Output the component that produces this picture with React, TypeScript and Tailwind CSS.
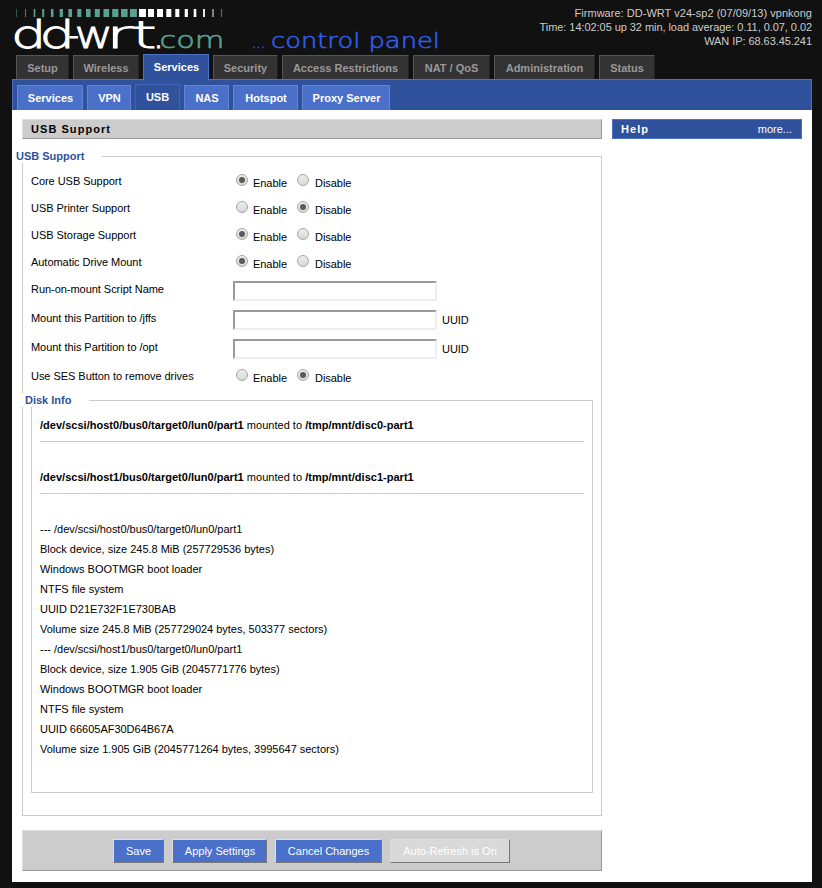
import type { ReactNode } from 'react';

const BARS: [number, number, string][] = [
  [16.5, 0.8, '#3d6b60'], [25.5, 1, '#4d8677'], [34.5, 1.6, '#5aa08f'], [43.2, 2, '#5aa08f'],
  [52.2, 2.6, '#5aa08f'], [61.3, 3.3, '#5aa08f'], [70.2, 3.6, '#5aa08f'], [79.3, 4, '#5aa08f'],
  [88.3, 4.6, '#5aa08f'], [97.3, 5, '#5aa08f'], [106.3, 5.6, '#5aa08f'], [115.3, 6.2, '#5aa08f'],
  [124.3, 6.6, '#5aa08f'], [133.4, 7, '#5aa08f'], [142.5, 7, '#fff'], [151, 6, '#fff'],
  [160, 6, '#fff'], [168.8, 5, '#fff'], [177.3, 4, '#fff'], [186.3, 3.2, '#fff'],
  [195, 2.6, '#fff'], [204, 1.8, '#fff'], [213, 1.2, '#ccc'], [221.5, 1.2, '#666'],
];

// Each wordmark letter is stretched on its own: [letter, x, advance width]
const WORDMARK: [string, number, number][] = [
  ['d', 11, 35.4], ['d', 39.4, 35.4], ['-', 68.4, 10.4], ['w', 74.5, 38.5], ['r', 106, 28], ['t', 132.5, 24], ['.', 152.5, 12],
];

function Logo() {
  return (
    <svg width="450" height="54" viewBox="0 0 450 54" className="block shrink-0 overflow-visible">
      {BARS.map(([cx, w, fill]) => (
        <rect key={cx} x={cx - w / 2} y="9" width={w} height="8" fill={fill} />
      ))}
      <g fontFamily="'DejaVu Sans Light', 'DejaVu Sans', sans-serif" fontWeight="200">
        {WORDMARK.map(([letter, x, width]) => (
          <text key={x} x={x} y="48" fontSize="36.5" fill="#fff" stroke="#fff" strokeWidth="0.9" textLength={width} lengthAdjust="spacingAndGlyphs">{letter}</text>
        ))}
        <text x="159.5" y="48" fontSize="23" fill="#5aa08f" stroke="#5aa08f" strokeWidth="0.6" textLength="65" lengthAdjust="spacingAndGlyphs">com</text>
        <text x="252" y="47.5" fontSize="21" fill="#2f60f0" stroke="#2f60f0" strokeWidth="0.5" textLength="13" lengthAdjust="spacingAndGlyphs">...</text>
        <text x="271" y="47.5" fontSize="21" fill="#2f60f0" stroke="#2f60f0" strokeWidth="0.5" textLength="169" lengthAdjust="spacingAndGlyphs">control panel</text>
      </g>
    </svg>
  );
}

const TABS: [string, string][] = [
  ['Setup', 'w-[53px]'], ['Wireless', 'w-[66px]'], ['Services', 'w-[66px]'], ['Security', 'w-[65px]'],
  ['Access Restrictions', 'w-[127px]'], ['NAT / QoS', 'w-[77px]'], ['Administration', 'w-[101px]'], ['Status', 'w-[56px]'],
];

const SUBTABS: [string, string][] = [
  ['Services', 'w-[66px]'], ['VPN', 'w-[44px]'], ['USB', 'w-[45px]'], ['NAS', 'w-[45px]'],
  ['Hotspot', 'w-[65px]'], ['Proxy Server', 'w-[88px]'],
];

function Radio({ on }: { on: boolean }) {
  return (
    <span className="mt-px flex size-3 items-center justify-center rounded-full border border-[#a6a6a6] bg-linear-to-b from-[#eee] to-[#d8d8d8]">
      {on && <span className="size-1.5 rounded-full bg-[#5a5a5a]" />}
    </span>
  );
}

function RadioRow({ label, enabled }: { label: string; enabled: boolean }) {
  return (
    <div className="flex h-[27px] items-start tracking-[-0.04px]">
      <span className="w-[205px] pt-0.5">{label}</span>
      <Radio on={enabled} />
      <span className="ml-[5px] w-11 pt-1">Enable</span>
      <Radio on={!enabled} />
      <span className="ml-1.5 pt-1">Disable</span>
    </div>
  );
}

function InputRow({ label, suffix }: { label: string; suffix?: string }) {
  return (
    <div className="flex h-[29px] items-start tracking-[-0.04px]">
      <span className="w-[202px] pt-0.5">{label}</span>
      <input className="h-5 w-[204px] border-2 border-t-[#999] border-r-[#eee] border-b-[#eee] border-l-[#999] bg-white outline-none" />
      {suffix && <span className="ml-[5px] pt-1">{suffix}</span>}
    </div>
  );
}

function Button({ children, className }: { children: ReactNode; className: string }) {
  return (
    <button className={`h-6 border border-t-[#ddd] border-r-[#777] border-b-[#777] border-l-[#ddd] pt-px text-white ${className}`}>
      {children}
    </button>
  );
}

const DISK_LINES = [
  '--- /dev/scsi/host0/bus0/target0/lun0/part1',
  'Block device, size 245.8 MiB (257729536 bytes)',
  'Windows BOOTMGR boot loader',
  'NTFS file system',
  'UUID D21E732F1E730BAB',
  'Volume size 245.8 MiB (257729024 bytes, 503377 sectors)',
  '--- /dev/scsi/host1/bus0/target0/lun0/part1',
  'Block device, size 1.905 GiB (2045771776 bytes)',
  'Windows BOOTMGR boot loader',
  'NTFS file system',
  'UUID 66605AF30D64B67A',
  'Volume size 1.905 GiB (2045771264 bytes, 3995647 sectors)',
];

function Mount({ device, target }: { device: string; target: string }) {
  return (
    <div className="h-[52px]">
      <p className="h-[27px] border-b border-[#ccc] leading-5 tracking-[0.02px]">
        <b>{device}</b> mounted to <b>{target}</b>
      </p>
    </div>
  );
}

export default function App() {
  return (
    <div className="h-[888px] w-[822px] overflow-hidden bg-[#111] font-['Liberation_Sans',Arial,sans-serif] text-[11px] leading-[13px] text-black">
      <header className="flex h-[54px] justify-between pr-[10px]">
        <Logo />
        <div className="pt-1.5 text-right leading-[14px] tracking-[-0.06px] text-[#ccc]">
          <p className="tracking-[0.03px]">Firmware: DD-WRT v24-sp2 (07/09/13) vpnkong</p>
          <p>Time: 14:02:05 up 32 min, load average: 0.11, 0.07, 0.02</p>
          <p>WAN IP: 68.63.45.241</p>
        </div>
      </header>

      <nav className="flex h-[25px] items-end gap-1 pl-4 font-bold">
        {TABS.map(([name, width]) =>
          name === 'Services' ? (
            <div key={name} className={`relative z-10 -mb-0.5 h-[27px] border border-b-0 border-[#4a70c9] bg-[#30519c] pt-1.5 pl-px text-center text-white ${width}`}>{name}</div>
          ) : (
            <div key={name} className={`h-6 border border-b-0 border-t-[#555] border-r-[#222] border-l-[#555] bg-[#333] pt-1.5 text-center text-[#999] ${width}`}>{name}</div>
          ),
        )}
      </nav>

      <nav className="mr-[10px] ml-3 flex h-[31px] items-end gap-1 border border-b-0 border-[#4a70c9] bg-[#30519c] pl-1 font-bold text-white">
        {SUBTABS.map(([name, width]) =>
          name === 'USB' ? (
            <div key={name} className={`h-[26px] border border-b-0 border-[#4063b5] bg-[#30519c] pt-1.5 text-center ${width}`}>{name}</div>
          ) : (
            <div key={name} className={`h-[25px] border border-b-0 border-[#6485d6] bg-[#4a70c9] pt-1.5 pl-px text-center ${width}`}>{name}</div>
          ),
        )}
      </nav>

      <main className="mr-[10px] ml-3 flex h-[772px] gap-[10px] bg-white px-[10px] pt-[9px]">
        <div className="w-[580px]">
          <h2 className="h-5 border border-t-[#ddd] border-r-[#999] border-b-[#999] border-l-[#ddd] bg-[#ccc] pt-[3px] pl-2 font-bold tracking-[1.05px]">USB Support</h2>

          <fieldset className="mt-[10px] h-[667px] border border-[#ccc] px-2">
            <legend className="-ml-[18px] h-[14px] bg-white pt-px pr-[18px] pl-[3px] font-bold text-[#30519c]">USB Support</legend>
            <div className="pt-[10px]">
              <RadioRow label="Core USB Support" enabled />
              <RadioRow label="USB Printer Support" enabled={false} />
              <RadioRow label="USB Storage Support" enabled />
              <RadioRow label="Automatic Drive Mount" enabled />
              <InputRow label="Run-on-mount Script Name" />
              <InputRow label="Mount this Partition to /jffs" suffix="UUID" />
              <InputRow label="Mount this Partition to /opt" suffix="UUID" />
              <RadioRow label="Use SES Button to remove drives" enabled={false} />
            </div>
            <fieldset className="-mt-0.5 h-[400px] border border-[#ccc] px-2">
              <legend className="-ml-[18px] h-[14px] bg-white pt-px pr-[18px] pl-[3px] font-bold text-[#30519c]">Disk Info</legend>
              <div className="pt-2">
                <Mount device="/dev/scsi/host0/bus0/target0/lun0/part1" target="/tmp/mnt/disc0-part1" />
                <Mount device="/dev/scsi/host1/bus0/target0/lun0/part1" target="/tmp/mnt/disc1-part1" />
                {DISK_LINES.map((line, i) => (
                  <p key={i} className="leading-5 tracking-[-0.015px]">{line}</p>
                ))}
              </div>
            </fieldset>
          </fieldset>

          <div className="mt-[14px] flex h-[41px] gap-2 border border-t-[#ddd] border-r-[#999] border-b-[#999] border-l-[#ddd] bg-[#ccc] pt-2 pl-[90px]">
            <Button className="w-[51px] bg-[#4a70c9]">Save</Button>
            <Button className="w-[95px] bg-[#4a70c9] pl-px">Apply Settings</Button>
            <Button className="w-[107px] bg-[#4a70c9]">Cancel Changes</Button>
            <Button className="w-[120px] bg-[#d9d9d9]">Auto-Refresh is On</Button>
          </div>
        </div>

        <aside className="flex h-5 w-[190px] justify-between border border-[#4a70c9] bg-[#30519c] pt-[3px] pr-[9px] pl-2 text-white">
          <b className="tracking-[1.05px]">Help</b>
          <span>more...</span>
        </aside>
      </main>
    </div>
  );
}
